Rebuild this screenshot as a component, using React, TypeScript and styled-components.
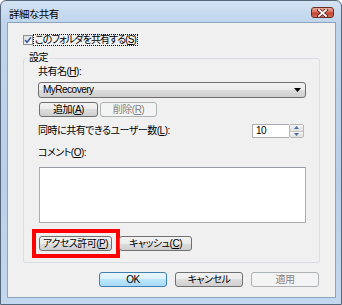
import React from 'react';
import styled, { createGlobalStyle } from 'styled-components';

const GlobalStyle = createGlobalStyle`
  html, body {
    margin: 0;
    padding: 0;
    background: #ffffff;
  }
  body {
    font-family: "Liberation Sans", "Noto Sans CJK JP", sans-serif;
    font-size: 10px;
    line-height: 12px;
    letter-spacing: -0.5px;
    font-feature-settings: "palt";
    color: #000000;
  }
  * {
    box-sizing: border-box;
  }
`;

const Window = styled.div`
  width: 342px;
  height: 305px;
  display: flex;
  flex-direction: column;
  padding: 0 5px 6px 6px;
  border: 1px solid #56677c;
  border-radius: 6px 6px 0 0;
  background: linear-gradient(180deg, #d3e3f3 0%, #bfd5ec 7%, #b9d0e8 60%, #c3d8ee 100%);
`;

const TitleBar = styled.div`
  height: 21px;
  display: flex;
  align-items: flex-start;
`;

const Title = styled.div`
  margin-top: 7px;
  padding-left: 2px;
  font-size: 10.5px;
`;

const CloseButton = styled.div`
  margin-left: auto;
  margin-right: 2px;
  margin-top: 6px;
  width: 23px;
  height: 11px;
  border: 1px solid #6b2c24;
  border-radius: 3px;
  background: linear-gradient(180deg, #e9a99a 0%, #d6705f 45%, #c2422f 55%, #d3705a 100%);
  display: flex;
  align-items: center;
  justify-content: center;
`;

const Client = styled.div`
  flex: 1;
  display: flex;
  flex-direction: column;
  background: #f0f0f0;
  border: 1px solid #8ea4bd;
  padding: 11px 15px 0 15px;
`;

const CheckRow = styled.div`
  height: 12px;
  display: flex;
  align-items: center;
`;

const CheckBox = styled.div`
  width: 10px;
  height: 10px;
  border: 1px solid #8e8f8f;
  background: linear-gradient(135deg, #dcdcdc 0%, #ffffff 100%);
  display: flex;
  align-items: center;
  justify-content: center;
`;

const FocusLabel = styled.span`
  border: 1px dotted #000000;
  padding: 0 1px;
  line-height: 10px;
  height: 12px;
  letter-spacing: -0.9px;
`;

const Group = styled.fieldset`
  margin: 6px 0 0 0;
  padding: 0;
  border: 1px solid #d5dfe5;
  border-radius: 3px;
  min-width: 0;
`;

const Legend = styled.legend`
  margin-left: 3px;
  padding: 0 2px;
  line-height: 12px;
`;

const GroupBody = styled.div`
  display: flex;
  flex-direction: column;
  padding: 2px 13px 11px 14px;
`;

const Label = styled.div<{ $gap?: number }>`
  margin-top: ${(p) => p.$gap ?? 0}px;
  line-height: 12px;
`;

const Key = styled.span`
  text-decoration: underline;
`;

const Combo = styled.div`
  margin-top: 4px;
  height: 16px;
  display: flex;
  align-items: center;
  justify-content: space-between;
  padding: 0 4px 0 4px;
  border: 1px solid #707070;
  border-radius: 3px;
  background: linear-gradient(180deg, #f2f2f2 0%, #ebebeb 50%, #dddddd 50%, #cfcfcf 100%);
`;

const ButtonRow = styled.div<{ $gap: number; $top: number }>`
  display: flex;
  gap: ${(p) => p.$gap}px;
  margin-top: ${(p) => p.$top}px;
  padding-left: 1px;
`;

const Button = styled.div<{ $width: number; $variant?: 'default' | 'disabled' }>`
  position: relative;
  width: ${(p) => p.$width}px;
  height: 15px;
  display: flex;
  align-items: center;
  justify-content: center;
  border-radius: 3px;
  border: 1px solid
    ${(p) => (p.$variant === 'default' ? '#3c7fb1' : p.$variant === 'disabled' ? '#adb2b5' : '#707070')};
  color: ${(p) => (p.$variant === 'disabled' ? '#838383' : '#000000')};
  background: ${(p) =>
    p.$variant === 'default'
      ? 'linear-gradient(180deg, #eaf6fd 0%, #d9f0fc 50%, #bee6fd 50%, #a7d9f5 100%)'
      : p.$variant === 'disabled'
      ? '#f4f4f4'
      : 'linear-gradient(180deg, #f2f2f2 0%, #ebebeb 50%, #dddddd 50%, #cfcfcf 100%)'};
`;

const Highlight = styled.div`
  position: absolute;
  left: -8px;
  top: -8px;
  right: -9px;
  bottom: -8px;
  border: 4px solid #ff0000;
  pointer-events: none;
`;

const SpinRow = styled.div`
  margin-top: 7px;
  height: 14px;
  display: flex;
  align-items: center;
  justify-content: space-between;
  padding-right: 2px;
`;

const Spinner = styled.div`
  display: flex;
  height: 14px;
`;

const SpinField = styled.div`
  width: 37px;
  height: 14px;
  border: 1px solid #abadb3;
  border-right: none;
  background: #ffffff;
  padding-left: 3px;
  line-height: 12px;
`;

const SpinButtons = styled.div`
  width: 15px;
  height: 14px;
  display: flex;
  flex-direction: column;
  border: 1px solid #b8b8b8;
  border-radius: 2px;
  overflow: hidden;
`;

const SpinHalf = styled.div`
  flex: 1;
  display: flex;
  align-items: center;
  justify-content: center;
  background: linear-gradient(180deg, #f6f6f6 0%, #dedede 100%);
  & + & {
    border-top: 1px solid #c4c4c4;
  }
`;

const TextArea = styled.div`
  margin-top: 8px;
  margin-left: 1px;
  height: 56px;
  border: 1px solid #abadb3;
  border-top-color: #9a9ca3;
  background: #ffffff;
`;

const DialogButtons = styled.div`
  display: flex;
  justify-content: flex-end;
  gap: 8px;
  margin-top: 9px;
  padding-right: 1px;
`;

const App = (): JSX.Element => {
  return (
    <>
      <GlobalStyle />
      <Window>
        <TitleBar>
          <Title>詳細な共有</Title>
          <CloseButton>
            <svg width="11" height="8" viewBox="0 0 11 8">
              <path d="M2 1 L9 7 M9 1 L2 7" stroke="#4a1d17" strokeWidth="3.2" strokeLinecap="square" />
              <path d="M2 1 L9 7 M9 1 L2 7" stroke="#ffffff" strokeWidth="1.8" strokeLinecap="square" />
            </svg>
          </CloseButton>
        </TitleBar>
        <Client>
          <CheckRow>
            <CheckBox>
              <svg width="8" height="8" viewBox="0 0 8 8">
                <path d="M1 4 L3 6.3 L7 1.2" stroke="#3a55a0" strokeWidth="1.5" fill="none" />
              </svg>
            </CheckBox>
            <FocusLabel>
              このフォルダを共有する(<Key>S</Key>)
            </FocusLabel>
          </CheckRow>
          <Group>
            <Legend>設定</Legend>
            <GroupBody>
              <Label>
                共有名(<Key>H</Key>):
              </Label>
              <Combo>
                <span>MyRecovery</span>
                <svg width="7" height="4" viewBox="0 0 7 4">
                  <path d="M0 0 H7 L3.5 4 Z" fill="#000000" />
                </svg>
              </Combo>
              <ButtonRow $gap={2} $top={4}>
                <Button $width={59}>
                  追加(<Key>A</Key>)
                </Button>
                <Button $width={57} $variant="disabled">
                  削除(<Key>R</Key>)
                </Button>
              </ButtonRow>
              <SpinRow>
                <span>
                  同時に共有できるユーザー数(<Key>L</Key>):
                </span>
                <Spinner>
                  <SpinField>10</SpinField>
                  <SpinButtons>
                    <SpinHalf>
                      <svg width="5" height="3" viewBox="0 0 5 3">
                        <path d="M0 3 H5 L2.5 0 Z" fill="#4b6c9a" />
                      </svg>
                    </SpinHalf>
                    <SpinHalf>
                      <svg width="5" height="3" viewBox="0 0 5 3">
                        <path d="M0 0 H5 L2.5 3 Z" fill="#4b6c9a" />
                      </svg>
                    </SpinHalf>
                  </SpinButtons>
                </Spinner>
              </SpinRow>
              <Label $gap={9}>
                コメント(<Key>O</Key>):
              </Label>
              <TextArea />
              <ButtonRow $gap={7} $top={13}>
                <Button $width={73}>
                  アクセス許可(<Key>P</Key>)
                  <Highlight />
                </Button>
                <Button $width={73}>
                  キャッシュ(<Key>C</Key>)
                </Button>
              </ButtonRow>
            </GroupBody>
          </Group>
          <DialogButtons>
            <Button $width={68} $variant="default">
              OK
            </Button>
            <Button $width={68}>キャンセル</Button>
            <Button $width={68} $variant="disabled">
              適用
            </Button>
          </DialogButtons>
        </Client>
      </Window>
    </>
  );
};

export default App;
